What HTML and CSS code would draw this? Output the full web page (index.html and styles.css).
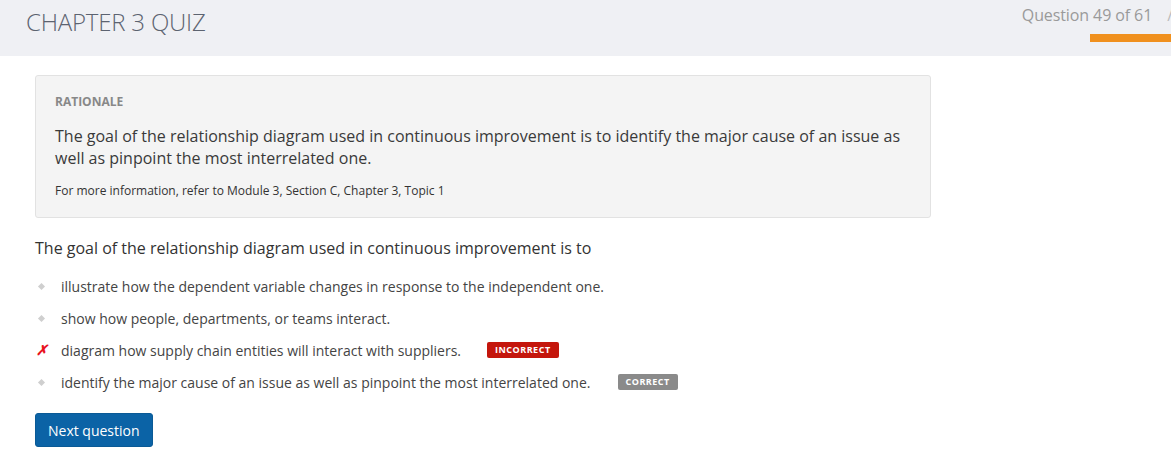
FILE: index.html
```html
<!DOCTYPE html>
<html>
<head>
<meta charset="utf-8">
<link rel="stylesheet" href="styles.css">
</head>
<body>
<header class="topbar">
  <h1 class="title">CHAPTER 3 QUIZ</h1>
  <div class="progress">
    <div class="progress-text">Question 49 of 61<span class="edge">/</span></div>
    <div class="progress-bar"></div>
  </div>
</header>
<main class="content">
  <section class="rationale">
    <div class="rationale-label">RATIONALE</div>
    <p class="rationale-text">The goal of the relationship diagram used in continuous improvement is to identify the major cause of an issue as well as pinpoint the most interrelated one.</p>
    <p class="rationale-ref">For more information, refer to Module 3, Section C, Chapter 3, Topic 1</p>
  </section>
  <p class="question">The goal of the relationship diagram used in continuous improvement is to</p>
  <ul class="options">
    <li class="option"><span class="mark"><span class="dot"></span></span><span class="opt-text">illustrate how the dependent variable changes in response to the independent one.</span></li>
    <li class="option"><span class="mark"><span class="dot"></span></span><span class="opt-text">show how people, departments, or teams interact.</span></li>
    <li class="option"><span class="mark"><span class="cross">✗</span></span><span class="opt-text">diagram how supply chain entities will interact with suppliers.</span><span class="badge badge-incorrect">INCORRECT</span></li>
    <li class="option"><span class="mark"><span class="dot"></span></span><span class="opt-text">identify the major cause of an issue as well as pinpoint the most interrelated one.</span><span class="badge badge-correct">CORRECT</span></li>
  </ul>
  <button class="next-btn">Next question</button>
</main>
</body>
</html>
```

FILE: styles.css
```css
* { box-sizing: border-box; }
html, body { margin: 0; padding: 0; }
body {
  font-family: "Open Sans", "Liberation Sans", sans-serif;
  color: #333;
  background: #fff;
  overflow: hidden;
  width: 1171px;
}
.topbar {
  height: 56px;
  background: #eff0f4;
  display: flex;
  justify-content: space-between;
  align-items: flex-start;
  padding-left: 26px;
}
.title {
  margin: 7px 0 0 0;
  font-weight: 300;
  font-size: 24px;
  line-height: 30px;
  color: #5c6370;
  letter-spacing: -0.2px;
}
.progress {
  display: flex;
  flex-direction: column;
  align-items: flex-end;
  width: 150px;
  margin-top: 4px;
}
.progress-text {
  font-size: 16px;
  line-height: 22px;
  color: #9a9a9a;
  white-space: nowrap;
  margin-right: -2px;
  letter-spacing: -0.1px;
}
.progress-text .edge { color: #bbb; margin-left: 15px; }
.progress-bar {
  width: 81px;
  height: 8px;
  background: #f0901e;
  margin-top: 8px;
  align-self: flex-end;
}
.content {
  padding: 19px 0 0 35px;
  width: 931px;
}
.rationale {
  background: #f4f4f4;
  border: 1px solid #e2e2e2;
  border-radius: 3px;
  padding: 18px 20px 17px 19px;
}
.rationale-label {
  font-size: 12px;
  font-weight: 700;
  color: #888;
  line-height: 16px;
}
.rationale-text {
  margin: 15px 0 0 0;
  font-size: 16px;
  line-height: 22px;
  color: #3a3a3a;
}
.rationale-ref {
  margin: 13px 0 0 0;
  font-size: 12px;
  line-height: 18px;
  color: #333;
}
.question {
  margin: 19px 0 0 0;
  font-size: 16px;
  line-height: 22px;
  color: #333;
}
.options {
  list-style: none;
  margin: 17px 0 0 0;
  padding: 0;
}
.option {
  display: flex;
  align-items: center;
  height: 32px;
  font-size: 14px;
  color: #444;
}
.option:first-child { margin-top: -6px; }
.mark {
  width: 26px;
  display: flex;
  align-items: center;
  justify-content: flex-start;
  padding-left: 3px;
}
.dot {
  width: 5px;
  height: 5px;
  background: #cfcfcf;
  transform: rotate(45deg);
  margin-left: 1px;
}
.cross {
  color: #e8141e;
  font-size: 14px;
  font-weight: 700;
  line-height: 1;
  margin-left: -2px;
  font-style: italic;
}
.badge {
  display: inline-block;
  margin-left: 26px;
  font-size: 9px;
  font-weight: 700;
  color: #fff;
  letter-spacing: 0.5px;
  padding: 0 8px;
  height: 16px;
  line-height: 16px;
  border-radius: 2px;
}
.badge-incorrect { background: #c4160c; }
.badge-correct { background: #8a8a8a; margin-left: 27px; }
.next-btn {
  margin-top: 15px;
  font-family: "Open Sans", "Liberation Sans", sans-serif;
  font-size: 14px;
  color: #fff;
  background: #0b63a6;
  border: 1px solid #0a5a96;
  border-radius: 3px;
  height: 34px;
  padding: 0 12px;
  cursor: pointer;
}
```
